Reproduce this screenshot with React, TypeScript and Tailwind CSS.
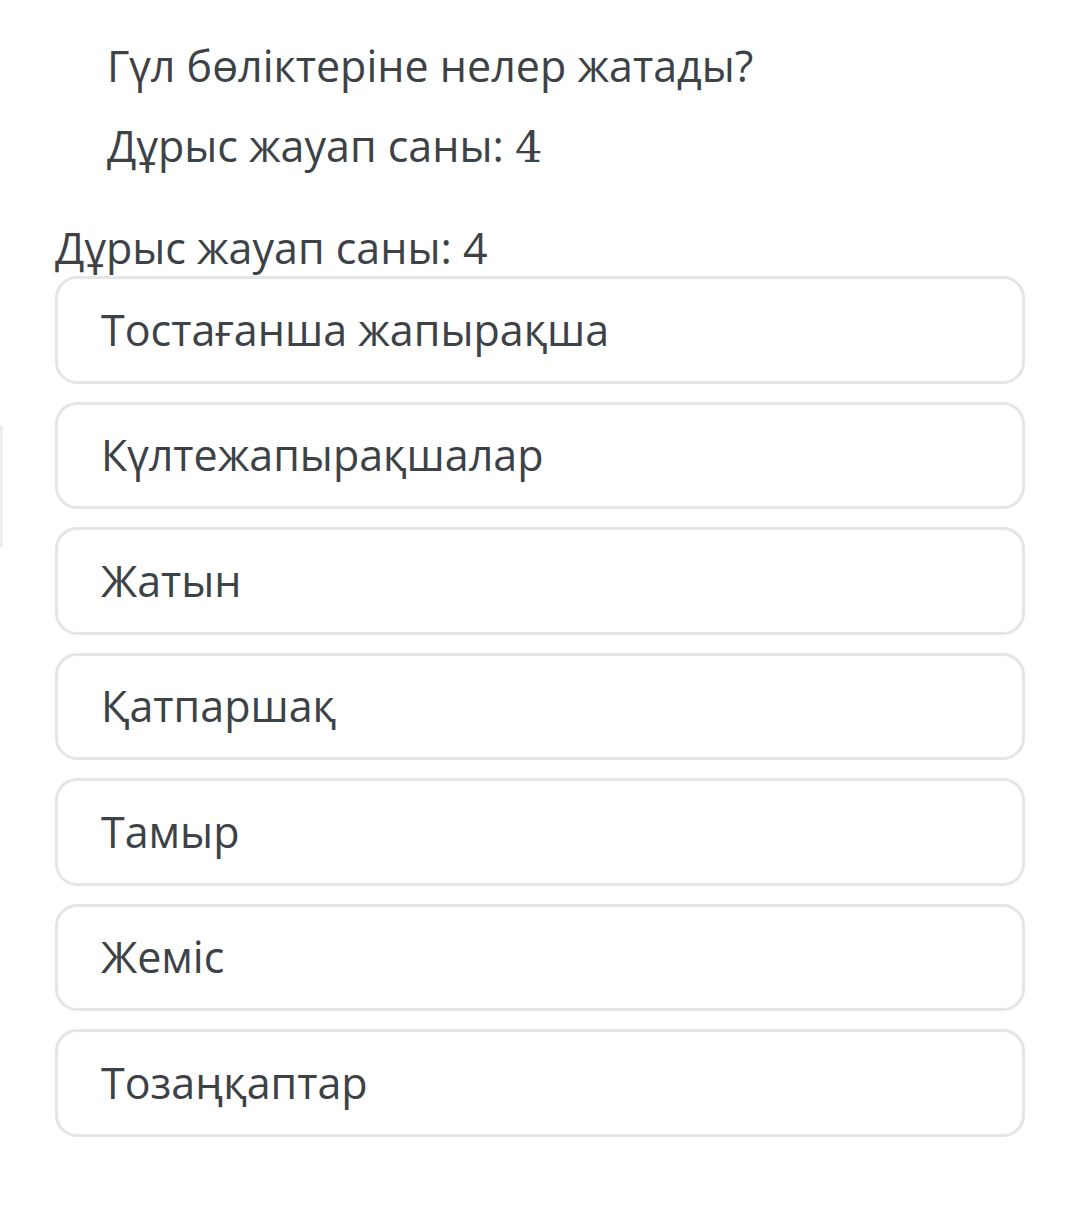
import React from "react";

const options = [
  "Тостағанша жапырақша",
  "Күлтежапырақшалар",
  "Жатын",
  "Қатпаршақ",
  "Тамыр",
  "Жеміс",
  "Тозаңқаптар",
];

export default function App() {
  return (
    <div
      className="relative w-[1068px] h-[1232px] bg-white text-[#3d4247]"
      style={{ fontFamily: '"Open Sans", "Noto Sans", sans-serif' }}
    >
      <div className="absolute left-0 top-[425px] w-[3px] h-[122px] bg-[#eceef0]" />
      <div className="pl-[107px] pt-[36px]">
        <div className="text-[43px] leading-[60px] h-[60px]">Гүл бөліктеріне нелер жатады?</div>
        <div className="text-[43px] leading-[60px] mt-[20px] h-[60px]">
          Дұрыс жауап саны:{" "}
          <span style={{ fontFamily: '"DejaVu Serif", "Liberation Serif", serif' }}>4</span>
        </div>
      </div>
      <div className="pl-[55px] pr-[43px] mt-[42px]">
        <div className="text-[43px] leading-[60px] h-[60px]">Дұрыс жауап саны: 4</div>
        <div className="flex flex-col gap-[18px] mt-[-2px]">
          {options.map((o) => (
            <div
              key={o}
              className="h-[107.5px] rounded-[22px] border-[3px] border-[#e3e5e7] flex items-center pl-[43px] text-[43px]"
            >
              {o}
            </div>
          ))}
        </div>
      </div>
    </div>
  );
}
